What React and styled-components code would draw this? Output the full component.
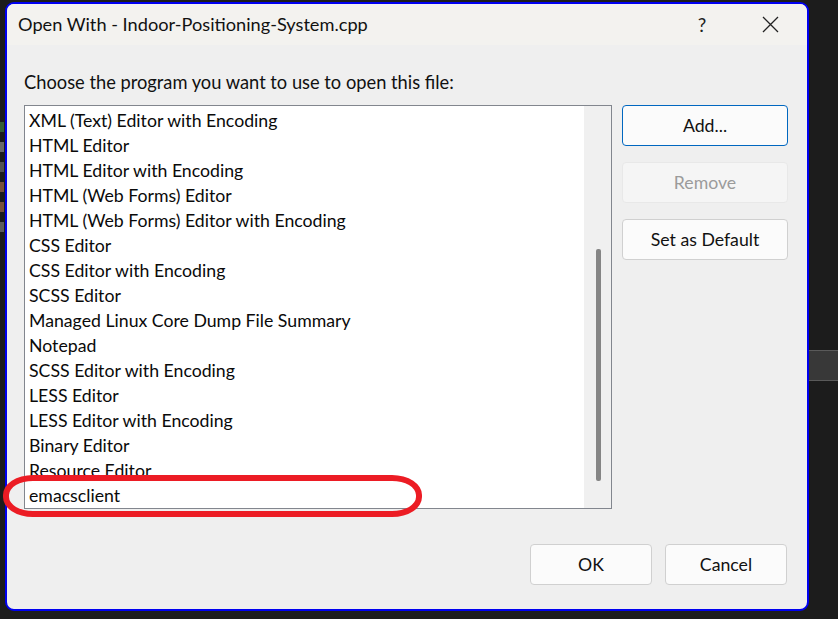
import React from 'react';
import styled, { createGlobalStyle } from 'styled-components';

const Global = createGlobalStyle`
  html, body {
    margin: 0;
    padding: 0;
    background: #1e1e1e;
  }
  body {
    font-family: 'Lato', 'Noto Sans', sans-serif;
  }
`;

const Desktop = styled.div`
  width: 838px;
  height: 619px;
  overflow: hidden;
  position: relative;
  background: #1c1c1c;
  display: flex;
  padding: 2px 0 0 5px;
  box-sizing: border-box;
`;

const SideBand = styled.div`
  position: absolute;
  right: 0;
  top: 350px;
  width: 31px;
  height: 29px;
  background: #383838;
  border-top: 1px solid #5a5a5a;
  border-bottom: 1px solid #5a5a5a;
`;

const Dialog = styled.div`
  width: 804px;
  height: 609px;
  box-sizing: border-box;
  border: 2px solid #0000f0;
  border-radius: 9px;
  background: #efefef;
  overflow: hidden;
  display: flex;
  flex-direction: column;
  position: relative;
`;

const TitleBar = styled.div`
  height: 41px;
  flex-shrink: 0;
  background: #f3f2ef;
  display: flex;
  align-items: center;
  padding-left: 11px;
  color: #111;
  font-size: 18.2px;
`;

const Title = styled.div`
  flex: 1;
  padding-bottom: 2px;
`;

const TitleButton = styled.div`
  width: 44px;
  height: 41px;
  display: flex;
  align-items: center;
  justify-content: center;
  font-size: 19px;
  color: #222;
  margin-right: ${(p) => p.$gap || 0}px;
`;

const Body = styled.div`
  flex: 1;
  display: flex;
  flex-direction: column;
  padding: 0 18px 0 17px;
`;

const Prompt = styled.div`
  font-size: 18.3px;
  color: #111;
  padding-top: 27px;
  height: 36px;
  box-sizing: border-box;
  line-height: 20px;
  margin-bottom: 24px;
`;

const Main = styled.div`
  display: flex;
  gap: 10px;
`;

const ListBox = styled.div`
  width: 588px;
  height: 404px;
  box-sizing: border-box;
  border: 1px solid #82868e;
  background: #fff;
  display: flex;
`;

const Items = styled.div`
  flex: 1;
  overflow: hidden;
  padding-top: 2px;
`;

const Item = styled.div`
  height: 25px;
  line-height: 25px;
  padding-left: 4px;
  font-size: 17.7px;
  color: #0a0a0a;
  white-space: nowrap;
`;

const Track = styled.div`
  width: 26px;
  background: #f0f0f0;
  display: flex;
  justify-content: center;
  padding-left: 1px;
`;

const Thumb = styled.div`
  width: 5px;
  height: 232px;
  margin-top: 143px;
  background: #858585;
  border-radius: 2px;
`;

const SideButtons = styled.div`
  display: flex;
  flex-direction: column;
  gap: 16px;
`;

const Button = styled.div`
  width: ${(p) => p.$w || 166}px;
  height: 41px;
  box-sizing: border-box;
  border-radius: 4px;
  border: 1px solid ${(p) => (p.$primary ? '#0067c0' : p.$disabled ? '#e8e8e8' : '#d0d0d0')};
  background: ${(p) => (p.$disabled ? '#f5f5f5' : '#fbfbfb')};
  color: ${(p) => (p.$disabled ? '#9b9b9b' : '#111')};
  display: flex;
  align-items: center;
  justify-content: center;
  font-size: 17.7px;
`;

const Footer = styled.div`
  display: flex;
  justify-content: flex-end;
  gap: 13px;
  margin-top: 35px;
  padding-right: 2px;
`;

const Highlight = styled.div`
  position: absolute;
  left: 3px;
  top: 475px;
  width: 419px;
  height: 42px;
  box-sizing: border-box;
  border: 6px solid #ec1c24;
  border-radius: 30px / 20px;
  pointer-events: none;
`;

const Fragments = styled.div`
  position: absolute;
  left: 0;
  top: 122px;
  width: 4px;
  display: flex;
  flex-direction: column;
  gap: 10px;
`;

const Fragment = styled.div`
  height: 10px;
  background: ${(p) => p.$c};
  opacity: 0.7;
`;

const programs = [
  'XML (Text) Editor with Encoding',
  'HTML Editor',
  'HTML Editor with Encoding',
  'HTML (Web Forms) Editor',
  'HTML (Web Forms) Editor with Encoding',
  'CSS Editor',
  'CSS Editor with Encoding',
  'SCSS Editor',
  'Managed Linux Core Dump File Summary',
  'Notepad',
  'SCSS Editor with Encoding',
  'LESS Editor',
  'LESS Editor with Encoding',
  'Binary Editor',
  'Resource Editor',
  'emacsclient',
];

const CloseIcon = () => (
  <svg width="17" height="17" viewBox="0 0 17 17">
    <path d="M1 1 L16 16 M16 1 L1 16" stroke="#222" strokeWidth="1.3" fill="none" />
  </svg>
);

export default function App() {
  return (
    <>
      <Global />
      <Desktop>
        <Fragments>
          <Fragment $c="#3f7a3f" />
          <Fragment $c="#8a8a8a" />
          <Fragment $c="#6a6a6a" />
          <Fragment $c="#a06848" />
          <Fragment $c="#a06848" />
          <Fragment $c="#777" />
        </Fragments>
        <SideBand />
        <Dialog>
          <TitleBar>
            <Title>Open With - Indoor-Positioning-System.cpp</Title>
            <TitleButton $gap={24}>?</TitleButton>
            <TitleButton $gap={15}>
              <CloseIcon />
            </TitleButton>
          </TitleBar>
          <Body>
            <Prompt>Choose the program you want to use to open this file:</Prompt>
            <Main>
              <ListBox>
                <Items>
                  {programs.map((p) => (
                    <Item key={p}>{p}</Item>
                  ))}
                </Items>
                <Track>
                  <Thumb />
                </Track>
              </ListBox>
              <SideButtons>
                <Button $primary>Add...</Button>
                <Button $disabled>Remove</Button>
                <Button>Set as Default</Button>
              </SideButtons>
            </Main>
            <Footer>
              <Button $w={122}>OK</Button>
              <Button $w={122}>Cancel</Button>
            </Footer>
          </Body>
        </Dialog>
        <Highlight />
      </Desktop>
    </>
  );
}
